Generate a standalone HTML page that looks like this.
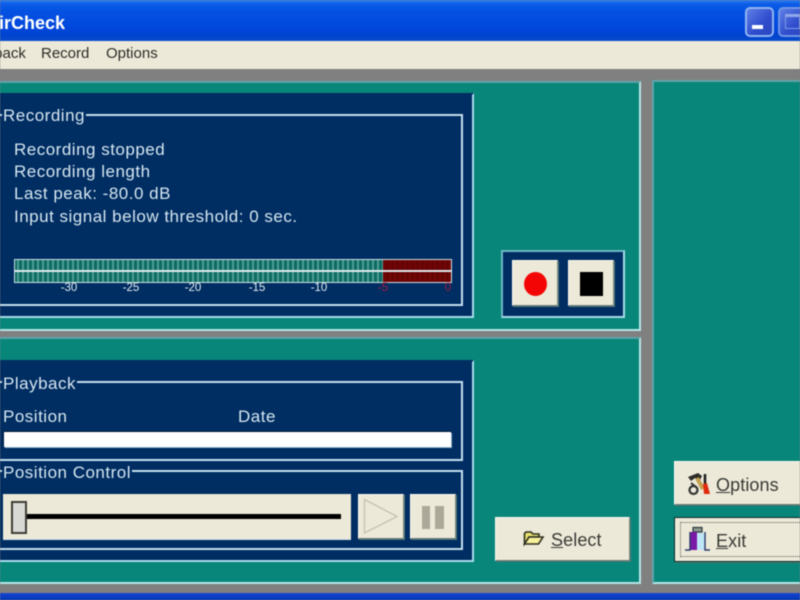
<!DOCTYPE html>
<html><head><meta charset="utf-8"><style>
html,body{margin:0;padding:0;width:800px;height:600px;overflow:hidden;background:#808080}
#r{position:relative;width:800px;height:600px;overflow:hidden;font-family:"Liberation Sans",sans-serif;filter:blur(.4px)}
#r div,#r svg{position:absolute;box-sizing:border-box}
.t{white-space:nowrap;color:#d5e6f0;font-size:17px;letter-spacing:.5px;line-height:20px}
.navy{background:#002d62;border:2px solid;border-color:#002d62 #a8dcec #a8dcec #002d62}
.g{border:2px solid #c5dfee}
.lbl{background:#002d62;padding:0 1px}
.teal{background:#078679;border:2px solid;border-color:#5fa3a8 #b6e6ea #b6e6ea #5fa3a8}
.btn{background:#ece9d8;border:1px solid;border-color:#fbfbf4 #7f8c80 #6d7d78 #fbfbf4;box-shadow:1px 1px 0 #4f7775}
.m{font-size:15px;color:#2c2c28;white-space:nowrap;line-height:20px}
.b{font-size:18px;color:#3a3a36;white-space:nowrap;letter-spacing:.1px;line-height:22px}
.s{font-size:11.500px;color:#e4eef3;white-space:nowrap;line-height:12px;width:30px;text-align:center}
</style></head><body><div id="r">
<div style="left:0;top:0;width:800px;height:41px;background:linear-gradient(#2f7fee 0,#0b5ce8 4px,#0553e2 10px,#0147dc 28px,#0042cf 36px,#0a4ccb 40px)"></div>
<div class="t" style="left:-14px;top:12px;font-size:18px;font-weight:bold;color:#fff;letter-spacing:0;line-height:22px">AirCheck</div>
<div style="left:745px;top:7px;width:29px;height:30px;border:2px solid #8fb4f2;border-radius:5px;background:linear-gradient(135deg,#5f7fe6,#2f4ccc 60%,#2a46c0)"></div>
<div style="left:752px;top:25px;width:11px;height:4px;background:#fff"></div>
<div style="left:778px;top:7px;width:30px;height:30px;border:2px solid #6f96e8;border-radius:5px;background:linear-gradient(135deg,#5f7fe6,#2f4ccc 60%,#2a46c0)"></div>
<div style="left:785px;top:14px;width:15px;height:15px;border:1.500px solid #7f9ae4;border-top:3px solid #8fa8ea"></div>
<div style="left:0;top:41px;width:800px;height:28px;background:#ece9d8"></div>
<div class="m" style="left:-35px;top:43.500px">Playback</div>
<div class="m" style="left:41px;top:43.500px">Record</div>
<div class="m" style="left:106px;top:43.500px">Options</div>
<div style="left:0;top:69px;width:800px;height:524px;background:#808080"></div>
<div style="left:0;top:593px;width:800px;height:7px;background:linear-gradient(#1a45d0,#0138b8)"></div>

<div class="teal" style="left:-4px;top:81px;width:645px;height:250px"></div>
<div class="teal" style="left:-4px;top:337px;width:645px;height:247px"></div>
<div class="teal" style="left:652px;top:80px;width:160px;height:504px"></div>

<div class="navy" style="left:-4px;top:93px;width:478px;height:225px"></div>
<div class="g" style="left:-4px;top:114px;width:467px;height:192px"></div>
<div class="t lbl" style="left:2px;top:106px">Recording</div>
<div class="t" style="left:14px;top:140px">Recording stopped</div>
<div class="t" style="left:14px;top:162px">Recording length</div>
<div class="t" style="left:14px;top:184px">Last peak: -80.0 dB</div>
<div class="t" style="left:14px;top:207px">Input signal below threshold: 0 sec.</div>

<div style="left:14px;top:259px;width:369px;height:23px;background:repeating-linear-gradient(90deg,#0d6c62 0,#0d6c62 3px,#4f9c93 3px,#4f9c93 5px)"></div>
<div style="left:383px;top:259px;width:68px;height:23px;background:repeating-linear-gradient(90deg,#6f0505 0,#6f0505 4px,#5a0404 4px,#5a0404 5px)"></div>
<div style="left:14px;top:259px;width:438px;height:24px;border:1.500px solid #cfe0e6"></div>
<div style="left:14px;top:270px;width:438px;height:1.500px;background:#dfeaee"></div>
<div class="s" style="left:54px;top:282px">-30</div>
<div class="s" style="left:116px;top:282px">-25</div>
<div class="s" style="left:178px;top:282px">-20</div>
<div class="s" style="left:242px;top:282px">-15</div>
<div class="s" style="left:304px;top:282px">-10</div>
<div class="s" style="left:368px;top:282px;color:#a01c40">-5</div>
<div class="s" style="left:433px;top:282px;color:#a01c40">0</div>

<div class="navy" style="left:501px;top:250px;width:124px;height:68px;border-color:#6fb8c4 #a8dcec #a8dcec #6fb8c4"></div>
<div class="btn" style="left:512px;top:260px;width:46px;height:46px"></div>
<div class="btn" style="left:568px;top:260px;width:46px;height:46px"></div>
<div style="left:524px;top:272px;width:23px;height:24px;border-radius:50%;background:#f40505"></div>
<div style="left:580px;top:272px;width:23px;height:24px;background:#000"></div>

<div class="navy" style="left:-4px;top:360px;width:478px;height:202px"></div>
<div class="g" style="left:-4px;top:381px;width:467px;height:80px"></div>
<div class="t lbl" style="left:2px;top:374px">Playback</div>
<div class="t" style="left:3px;top:407px">Position</div>
<div class="t" style="left:238px;top:407px">Date</div>
<div style="left:4px;top:432px;width:447px;height:15px;background:#fff;box-shadow:-1px -1px 0 #001a3d,1px 1px 0 #8fb3c8"></div>
<div class="g" style="left:-4px;top:470px;width:467px;height:80px"></div>
<div class="t lbl" style="left:2px;top:463px">Position Control</div>
<div style="left:3px;top:494px;width:348px;height:46px;background:#ece9d8;border-bottom:1px solid #cfe0e6"></div>
<div style="left:26px;top:514px;width:315px;height:5px;background:#000"></div>
<div style="left:11px;top:501px;width:16px;height:33px;background:#d8d8d4;border:2px solid #3e3e38"></div>
<div class="btn" style="left:358px;top:494px;width:46px;height:45px"></div>
<svg style="left:358px;top:494px" width="46" height="45"><path d="M6.500 5.500L39 22.500L6.500 39Z" fill="none" stroke="#c4c1b2" stroke-width="1.300"/></svg>
<div class="btn" style="left:410px;top:494px;width:46px;height:45px"></div>
<div style="left:422px;top:506px;width:8px;height:23px;background:#aca899"></div>
<div style="left:435px;top:506px;width:9px;height:23px;background:#aca899"></div>

<div class="btn" style="left:495px;top:517px;width:135px;height:44px"></div>
<svg style="left:523px;top:530px" width="22" height="18"><path d="M1.500 14V3.500L3 2H8L10 4H16V7H6L1.500 14Z" fill="#e8e070" stroke="#2e2e20" stroke-width="1.600"/><path d="M1.500 14H15.500L20 7H6Z" fill="#f6f09a" stroke="#2e2e20" stroke-width="1.600"/></svg>
<div class="b" style="left:551px;top:529px"><u>S</u>elect</div>

<div class="btn" style="left:674px;top:461px;width:140px;height:44px"></div>
<svg style="left:686px;top:471px" width="26" height="26"><path d="M2 6L12 2L16 5L14 9L9 7L5 10Z" fill="#2c2c28"/><path d="M11 7L17 18" stroke="#c4a050" stroke-width="4"/><path d="M19 3V13" stroke="#1c1c1c" stroke-width="2.500"/><path d="M17 13L21 12L24 23H18Z" fill="#e02a10"/><circle cx="7.500" cy="19" r="4" fill="none" stroke="#333" stroke-width="2.200"/><path d="M5 12L10 16" stroke="#333" stroke-width="2"/></svg>
<div class="b" style="left:716px;top:474px"><u>O</u>ptions</div>

<div class="btn" style="left:674px;top:517px;width:140px;height:45px;background:#ece9d8;border:1.500px solid #0c2a28"></div>
<div style="left:680px;top:522px;width:130px;height:35px;border:1.500px dotted #5a5a54"></div>
<svg style="left:684px;top:525px" width="30" height="30"><path d="M9 2.500H18V7H9Z" fill="#8f9890" stroke="#2c3c3c" stroke-width="1.200"/><path d="M6 7H13V25H6Z" fill="#7a18a8"/><path d="M13 8H21V25H13Z" fill="#bfe6f6"/><path d="M21 7V25H26M6 7V25H1" fill="none" stroke="#2a3a6a" stroke-width="1.400"/></svg>
<div class="b" style="left:716px;top:530px"><u>E</u>xit</div>
</div></body></html>
